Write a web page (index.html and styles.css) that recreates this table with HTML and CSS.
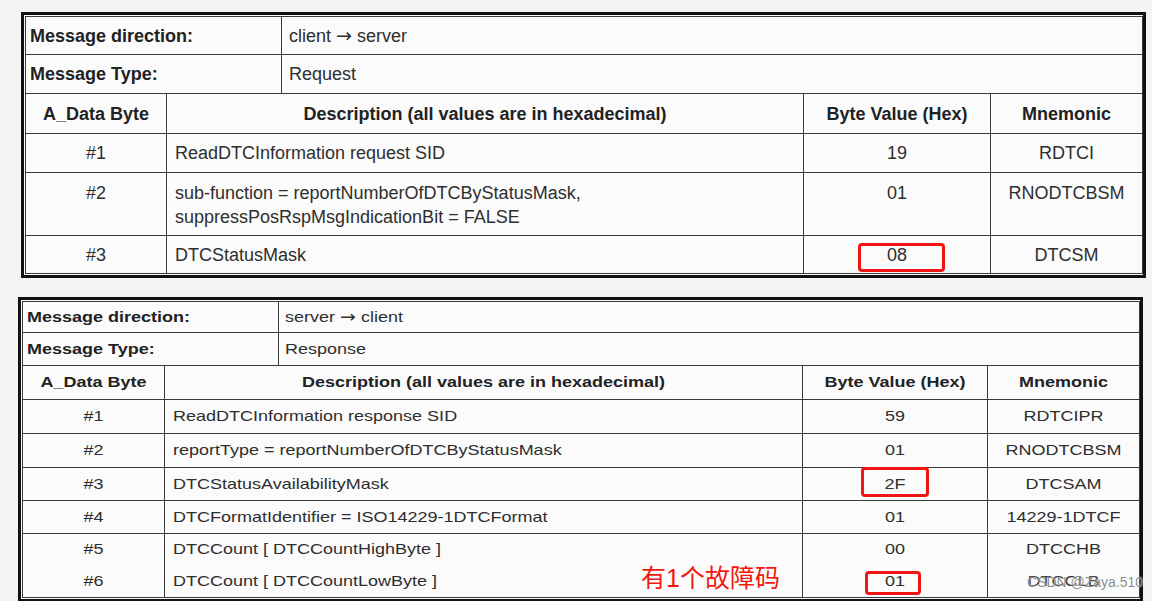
FILE: index.html
```html
<!DOCTYPE html>
<html>
<head>
<meta charset="utf-8">
<link rel="stylesheet" href="styles.css">
</head>
<body>
<div class="page">
  <div class="frame f1">
    <table class="tbl t1">
      <colgroup><col class="c1"><col class="c2"><col class="c3"><col class="c4"><col class="c5"></colgroup>
      <tr class="h38"><td colspan="2" class="lab"><span>Message direction:</span></td><td colspan="3" class="val"><span>client <em class="arr">→</em> server</span></td></tr>
      <tr class="h39"><td colspan="2" class="lab"><span>Message Type:</span></td><td colspan="3" class="val"><span>Request</span></td></tr>
      <tr class="h40 head"><td><span>A_Data Byte</span></td><td colspan="2"><span>Description (all values are in hexadecimal)</span></td><td><span>Byte Value (Hex)</span></td><td><span>Mnemonic</span></td></tr>
      <tr class="h39"><td class="ctr"><span>#1</span></td><td colspan="2" class="desc"><span>ReadDTCInformation request SID</span></td><td class="ctr"><span>19</span></td><td class="ctr"><span>RDTCI</span></td></tr>
      <tr class="h63 top"><td class="ctr"><span>#2</span></td><td colspan="2" class="desc"><span>sub-function = reportNumberOfDTCByStatusMask,<br>suppressPosRspMsgIndicationBit = FALSE</span></td><td class="ctr"><span>01</span></td><td class="ctr"><span>RNODTCBSM</span></td></tr>
      <tr class="h38"><td class="ctr"><span>#3</span></td><td colspan="2" class="desc"><span>DTCStatusMask</span></td><td class="ctr mark"><span>08</span><i class="box b1"></i></td><td class="ctr"><span>DTCSM</span></td></tr>
    </table>
  </div>

  <div class="frame f2">
    <table class="tbl t2">
      <colgroup><col class="d1"><col class="d2"><col class="d3"><col class="d4"><col class="d5"></colgroup>
      <tr class="h31"><td colspan="2" class="lab"><span>Message direction:</span></td><td colspan="3" class="val"><span>server <em class="arr">→</em> client</span></td></tr>
      <tr class="h33"><td colspan="2" class="lab"><span>Message Type:</span></td><td colspan="3" class="val"><span>Response</span></td></tr>
      <tr class="h34 head"><td><span>A_Data Byte</span></td><td colspan="2"><span>Description (all values are in hexadecimal)</span></td><td><span>Byte Value (Hex)</span></td><td><span>Mnemonic</span></td></tr>
      <tr class="h34"><td class="ctr"><span>#1</span></td><td colspan="2" class="desc"><span>ReadDTCInformation response SID</span></td><td class="ctr"><span>59</span></td><td class="ctr"><span>RDTCIPR</span></td></tr>
      <tr class="h34"><td class="ctr"><span>#2</span></td><td colspan="2" class="desc"><span>reportType = reportNumberOfDTCByStatusMask</span></td><td class="ctr"><span>01</span></td><td class="ctr"><span>RNODTCBSM</span></td></tr>
      <tr class="h33"><td class="ctr"><span>#3</span></td><td colspan="2" class="desc"><span>DTCStatusAvailabilityMask</span></td><td class="ctr mark"><span>2F</span><i class="box b2"></i></td><td class="ctr"><span>DTCSAM</span></td></tr>
      <tr class="h33"><td class="ctr"><span>#4</span></td><td colspan="2" class="desc"><span>DTCFormatIdentifier = ISO14229-1DTCFormat</span></td><td class="ctr"><span>01</span></td><td class="ctr"><span>14229-1DTCF</span></td></tr>
      <tr class="h32 open"><td class="ctr"><span>#5</span></td><td colspan="2" class="desc"><span>DTCCount [ DTCCountHighByte ]</span></td><td class="ctr"><span>00</span></td><td class="ctr"><span>DTCCHB</span></td></tr>
      <tr class="h32"><td class="ctr"><span>#6</span></td><td colspan="2" class="desc mark"><span>DTCCount [ DTCCountLowByte ]</span><b class="note">有1个故障码</b></td><td class="ctr mark"><span>01</span><i class="box b3"></i></td><td class="ctr mark"><span>DTCCLB</span><b class="wm">CSDN @Zaya.510</b></td></tr>
    </table>
  </div>
</div>
</body>
</html>
```

FILE: styles.css
```css
html, body {
  margin: 0;
  padding: 0;
  background: #f3f3f3;
}
body {
  font-family: "Liberation Sans", Arial, sans-serif;
  color: #2e2e2e;
  overflow: hidden;
}
.page {
  display: flex;
  flex-direction: column;
  align-items: flex-start;
}
.frame {
  box-sizing: border-box;
  width: 1125px;
  border: 3px solid #111;
  padding: 1px;
  background: #fbfbfb;
}
.f1 {
  margin: 12px 0 0 21px;
}
.f2 {
  margin: 19px 0 0 18px;
}
.tbl {
  width: 1117px;
  table-layout: fixed;
  border-collapse: collapse;
  font-size: 18px;
}
.tbl td {
  border: 1px solid #3a3a3a;
  padding: 0;
  white-space: nowrap;
}
.c1 { width: 141px; }
.c2 { width: 115px; }
.c3 { width: 522px; }
.c4 { width: 187px; }
.c5 { width: 152px; }
.d1 { width: 142px; }
.d2 { width: 114px; }
.d3 { width: 524px; }
.d4 { width: 185px; }
.d5 { width: 152px; }

.h31 { height: 31px; }
.h32 { height: 32px; }
.h33 { height: 33px; }
.h34 { height: 34px; }
.h38 { height: 38px; }
.h39 { height: 39px; }
.h40 { height: 40px; }
.h63 { height: 63px; }

.lab {
  font-weight: bold;
  color: #222;
  padding-left: 4px !important;
}
.val {
  padding-left: 7px !important;
}
.t2 .lab { padding-left: 4px !important; }
.t2 .val { padding-left: 6px !important; }
.arr {
  font-style: normal;
  font-family: "DejaVu Sans", sans-serif;
  font-size: 19px;
  line-height: 1;
}
.head td {
  font-weight: bold;
  color: #222;
  text-align: center;
}
.ctr {
  text-align: center;
}
.desc {
  padding-left: 8px !important;
}
.t1 td span {
  line-height: 24px;
}
.top td {
  vertical-align: top;
  padding-top: 8px !important;
}
.t2 td span {
  display: inline-block;
  transform: scaleY(0.84);
  line-height: 20px;
}
.open td {
  border-bottom-style: hidden;
}
.mark {
  position: relative;
}
.box {
  position: absolute;
  box-sizing: border-box;
  border: 3px solid #f01414;
  border-radius: 4px;
}
.b1 { left: 54px; top: 7px; width: 87px; height: 29px; }
.b2 { left: 58px; top: -1px; width: 68px; height: 30px; }
.b3 { left: 62px; top: 5px; width: 56px; height: 24px; }
.note {
  position: absolute;
  left: 476px;
  top: -3px;
  font-family: "Liberation Sans", "Noto Sans CJK SC", sans-serif;
  font-weight: normal;
  font-size: 25px;
  line-height: 30px;
  color: #f2180f;
}
.wm {
  position: absolute;
  left: 39px;
  top: 7px;
  font-weight: normal;
  font-size: 14px;
  line-height: 18px;
  color: rgba(120, 120, 120, 0.85);
  text-shadow: 0 0 2px rgba(255, 255, 255, 0.9);
}
```
